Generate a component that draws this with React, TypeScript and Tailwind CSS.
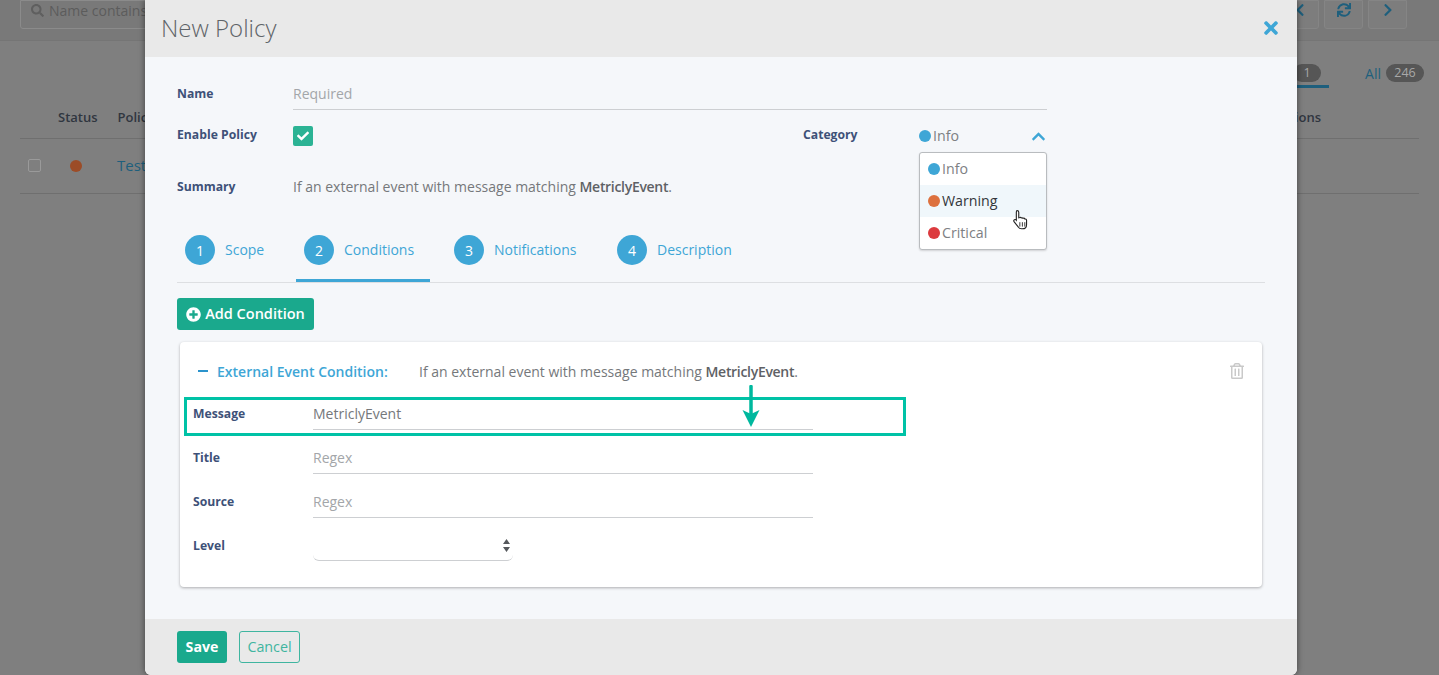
import React from "react";
import { FaTimes, FaRegTrashAlt, FaSearch, FaChevronLeft, FaChevronRight, FaSync, FaChevronUp, FaPlusCircle, FaCheck } from "react-icons/fa";

const Dot = ({ c }: { c: string }) => <span className={`inline-block w-[12px] h-[12px] rounded-full mr-[2px] ${c}`} />;

const Label = ({ children, className = "" }: { children: React.ReactNode; className?: string }) => (
  <div className={`text-[12.2px] font-bold text-[#3e5178] ${className}`}>{children}</div>
);

const Tab = ({ n, label, active, w }: { n: number; label: string; active?: boolean; w: string }) => (
  <div className={`${w} h-[49px] flex items-start pl-[8px] ${active ? "border-b-[3px] border-[#3ea6d6]" : ""}`}>
    <span className="w-[30px] h-[30px] mt-[2px] rounded-full bg-[#3ea6d6] text-white text-[14px] flex items-center justify-center">{n}</span>
    <span className="ml-[10px] mt-[8px] text-[14px] leading-[18px] text-[#3ea6d6]">{label}</span>
  </div>
);

const Field = ({ label, children }: { label: string; children: React.ReactNode }) => (
  <div className="flex h-[44px]">
    <Label className="w-[120px] pt-[3px] leading-[18px]">{label}</Label>
    {children}
  </div>
);

export default function App() {
  return (
    <div className="relative w-[1439px] h-[675px] overflow-hidden bg-[#7f7f7f] font-['Open_Sans',sans-serif]">
      {/* background page */}
      <div className="h-[41px] bg-[#797979] border-b border-[#757575] flex justify-between px-[20px]">
        <div className="w-[400px] h-[29px] border border-[#8b8b8b] rounded-b-[3px] flex items-center pl-[10px] pb-[9px] text-[14px] text-[#5c5c5c]">
          <FaSearch className="w-[13px] h-[13px] mr-[5px] text-[#5f5f5f]" />
          Name contains
        </div>
        <div className="flex gap-[5px] mr-[12px]">
          {[FaChevronLeft, FaSync, FaChevronRight].map((I, i) => (
            <div key={i} className="w-[39px] h-[29px] bg-[#7d7d7d] border border-[#858585] rounded-b-[3px] flex items-center justify-center pb-[9px] text-[#1e5f7d]">
              <I className="w-[14px] h-[14px]" />
            </div>
          ))}
        </div>
      </div>
      <div className="h-[48px] flex justify-end items-start pt-[23px] pr-[15px]">
        <div className="w-[50px] h-[24px] border-b-[3px] border-[#1e5f7d] mr-[36px] flex justify-end pr-[8px]">
          <span className="w-[28px] h-[18px] rounded-full bg-[#565656] text-[#a8a8a8] text-[12.5px] flex items-center justify-center">1</span>
        </div>
        <span className="text-[14px] text-[#1e5f7d] mr-[5px] leading-[20px]">All</span>
        <span className="w-[38px] h-[18px] rounded-full bg-[#565656] text-[#a8a8a8] text-[12.5px] flex items-center justify-center">246</span>
      </div>
      <div className="mx-[20px] h-[50px] border-b border-[#6f6f6f] flex items-center justify-between text-[13px] font-semibold text-[#30363f] pt-[9px]">
        <div className="flex gap-[20px] pl-[38px]"><span>Status</span><span>Policy</span></div>
        <span className="pr-[98px]">Actions</span>
      </div>
      <div className="mx-[20px] h-[55px] border-b border-[#6f6f6f] flex items-center pl-[8px] pb-[1px]">
        <span className="w-[13px] h-[13px] border border-[#9a9a9a] rounded-[2px]" />
        <span className="ml-[29px] w-[12px] h-[12px] rounded-full bg-[#9c4c27]" />
        <span className="ml-[35px] text-[15px] text-[#1e5f7d]">Testing</span>
      </div>

      {/* modal */}
      <div className="absolute left-[145px] top-0 w-[1152px] h-[675px] rounded-b-[6px] overflow-hidden bg-[#f5f7fa] shadow-[0_0_6px_rgba(0,0,0,0.5)] flex flex-col">
        <div className="h-[57px] shrink-0 bg-[#e9e9e9] flex items-center justify-between pl-[16px] pr-[16px] pb-[2px]">
          <span className="text-[24px] font-light text-[#5f6468]">New Policy</span>
          <FaTimes className="w-[20px] h-[20px] text-[#3ea6d6]" />
        </div>

        <div className="relative flex-1 px-[32px] pt-[21px]">
          <div className="flex w-[870px] h-[32px]">
            <Label className="w-[116px] pt-[7px] leading-[18px]">Name</Label>
            <div className="flex-1 border-b border-[#cdcfd2] text-[14px] text-[#a3a6a9] pt-[6px] leading-[20px]">Required</div>
          </div>
          <div className="flex w-[870px] h-[50px] mt-[15px]">
            <Label className="w-[116px] pt-[1px] leading-[18px]">Enable Policy</Label>
            <div className="w-[20px] h-[20px] mt-[1px] rounded-[2px] bg-[#2bb394] flex items-center justify-center">
              <FaCheck className="w-[12px] h-[12px] text-white" />
            </div>
            <Label className="ml-[490px] w-[116px] pt-[1px] leading-[18px]">Category</Label>
            <div className="flex-1 flex items-start justify-between text-[14.2px] leading-[20px] text-[#7d8083] pt-[1px]">
              <span className="flex items-center"><Dot c="bg-[#3ea6d6]" />Info</span>
              <FaChevronUp className="w-[15px] h-[15px] mt-[3px] mr-[1px] text-[#3ea6d6]" />
            </div>
          </div>
          <div className="flex h-[36px] mt-[3px]">
            <Label className="w-[116px] leading-[18px]">Summary</Label>
            <div className="text-[14px] leading-[18px] text-[#75787b]">If an external event with message matching <span className="font-semibold tracking-[-0.3px] text-[#5e6165]">MetriclyEvent</span>.</div>
          </div>
          <div className="flex border-b border-[#dddfe2] h-[50px] mt-[19px]">
            <Tab n={1} label="Scope" w="w-[119px]" />
            <Tab n={2} label="Conditions" active w="w-[134px]" />
            <div className="w-[16px]" />
            <Tab n={3} label="Notifications" w="w-[163px]" />
            <Tab n={4} label="Description" w="w-[200px]" />
          </div>
          <button className="mt-[15px] w-[137px] h-[32px] rounded-[3px] bg-[#1aa98d] text-white font-semibold text-[14.5px] flex items-center justify-center">
            <FaPlusCircle className="w-[15px] h-[15px] mr-[4px]" />Add Condition
          </button>
          <div className="relative ml-[3px] mt-[12px] w-[1082px] h-[245px] rounded-[4px] bg-white shadow-[0_1px_3px_rgba(0,0,0,0.3)] px-[13px]">
            <div className="flex items-center h-[60px] pb-[2px] text-[14px] text-[#75787b]">
              <span className="ml-[5px] w-[10px] h-[2px] bg-[#2b93cc]" />
              <span className="ml-[9px] w-[202px] font-semibold text-[#3ea6d6] text-[14px]">External Event Condition:</span>
              <span>If an external event with message matching <span className="font-semibold tracking-[-0.3px] text-[#5e6165]">MetriclyEvent</span>.</span>
              <FaRegTrashAlt className="ml-auto mr-[5px] w-[14px] h-[16px] text-[#c9c9c9]" />
            </div>
            <Field label="Message">
              <div className="w-[500px] h-[28px] border-b border-[#cdcfd2] text-[14px] leading-[20px] pt-[2px] text-[#75787b]">MetriclyEvent</div>
            </Field>
            <Field label="Title">
              <div className="w-[500px] h-[28px] border-b border-[#cdcfd2] text-[14px] leading-[20px] pt-[2px] text-[#a3a6a9]">Regex</div>
            </Field>
            <Field label="Source">
              <div className="w-[500px] h-[28px] border-b border-[#cdcfd2] text-[14px] leading-[20px] pt-[2px] text-[#a3a6a9]">Regex</div>
            </Field>
            <Field label="Level">
              <div className="w-[200px] h-[27px] rounded-b-[6px] border-b border-[#cdcfd2] flex justify-end pr-[3px] pt-[5px]">
                <svg width="7" height="13" viewBox="0 0 7 13" className="text-[#55585c]"><path d="M3.5 0 7 5H0z M0 8h7l-3.5 5z" fill="currentColor" /></svg>
              </div>
            </Field>
            {/* annotation */}
            <div className="absolute left-[4px] top-[55px] w-[722px] h-[39px] border-[3px] border-[#00c2a6]" />
            <svg className="absolute left-[561px] top-[43px]" width="20" height="43" viewBox="0 0 20 43">
              <path d="M10 1.500v28" stroke="#00b89e" strokeWidth="3.500" strokeLinecap="round" />
              <path d="M1.500 25 10 42 18.500 25 10 29z" fill="#00b89e" />
            </svg>
          </div>

          {/* dropdown */}
          <div className="absolute left-[774px] top-[95px] w-[128px] h-[98px] rounded-[3px] border border-[#b9bcbf] bg-white text-[14.2px] text-[#7d8083] shadow-[0_1px_2px_rgba(0,0,0,0.15)]">
            {[
              ["Info", "bg-[#3ea6d6]", ""],
              ["Warning", "bg-[#dd713e]", "bg-[#f0f7fb] text-[#33363a]"],
              ["Critical", "bg-[#dc3a3e]", ""],
            ].map(([t, c, r]) => (
              <div key={t} className={`h-[32px] flex items-center pl-[8px] ${r}`}><Dot c={c} />{t}</div>
            ))}
            <svg className="absolute left-[91px] top-[56px]" width="21" height="22" viewBox="0 0 18 20">
              <path d="M5 1.500c1 0 1.500.7 1.500 1.500v5l1-.3c.5-.2 1 0 1.300.4.600-.3 1.300-.1 1.600.4.600-.3 1.400 0 1.700.6.800-.2 1.500.3 1.500 1.200v3.700c0 2.200-1.500 4-3.800 4H9c-1.400 0-2.300-.6-3-1.700L2.200 11.500c-.5-.8-.2-1.500.4-1.800.6-.3 1.200-.1 1.700.5V3c0-1 .1-1.500.7-1.500z" fill="#fff" stroke="#222" strokeWidth="1" />
              <path d="M7.500 12v4M9.800 12v4M12 12v4" stroke="#222" strokeWidth=".8" />
            </svg>
          </div>
        </div>

        <div className="h-[56px] shrink-0 bg-[#e9e9e9] flex items-center pl-[32px] gap-[12px] pb-[1px]">
          <button className="w-[50px] h-[32px] rounded-[3px] bg-[#1aa98d] text-white font-bold text-[14.2px]">Save</button>
          <button className="w-[61px] h-[32px] rounded-[3px] border border-[#3fb5a0] text-[#3fb5a0] text-[14.3px]">Cancel</button>
        </div>
      </div>
    </div>
  );
}
